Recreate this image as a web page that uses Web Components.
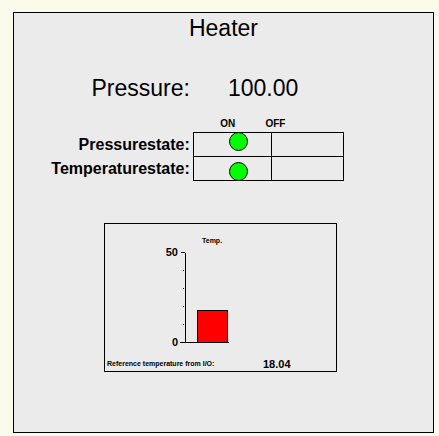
<!DOCTYPE html>
<html lang="en">
<head>
<meta charset="utf-8">
<title>Heater</title>
<style>
html, body { height: 100%; margin: 0; }
body { background: #fbfbec; color: #000; font-family: "Liberation Sans", Arial, sans-serif; display: flex; }
</style>
</head>
<body>
<heater-panel heading="Heater">
  <value-readout label="Pressure:" value="100.00"></value-readout>
  <state-table></state-table>
  <temp-gauge value="18.04" max="50"></temp-gauge>
</heater-panel>
<script>
class HeaterPanel extends HTMLElement {
  constructor() {
    super();
    this.attachShadow({ mode: 'open' }).innerHTML = `
      <style>
        :host { display: flex; flex-direction: column; flex: 1; box-sizing: border-box;
          margin: 12px 5px 3px 13px; border: 1px solid #000; background: #ebebeb; }
        h1 { margin: 0; font-size: 23px; line-height: 30px; font-weight: 400; text-align: center; }
      </style>
      <h1></h1><slot></slot>`;
    this.shadowRoot.querySelector('h1').textContent = this.getAttribute('heading');
  }
}
class ValueReadout extends HTMLElement {
  constructor() {
    super();
    this.attachShadow({ mode: 'open' }).innerHTML = `
      <style>
        :host { display: grid; grid-template-columns: 42% 1fr; column-gap: 38px;
          margin-top: 30px; font-size: 23px; line-height: 30px; }
        label { text-align: right; }
      </style>
      <label for="v"></label><output id="v"></output>`;
    this.shadowRoot.querySelector('label').textContent = this.getAttribute('label');
    this.shadowRoot.querySelector('output').textContent = this.getAttribute('value');
  }
}
class StateLamp extends HTMLElement {
  constructor() {
    super();
    this.attachShadow({ mode: 'open' }).innerHTML = `
      <style>
        :host { display: block; }
        svg { display: block; }
      </style>
      <svg width="19" height="19" viewBox="0 0 19 19" aria-hidden="true">
        <circle cx="9.5" cy="9.5" r="9" fill="#0f0" stroke="#000"/>
      </svg>`;
  }
}
class StateTable extends HTMLElement {
  constructor() {
    super();
    this.attachShadow({ mode: 'open' }).innerHTML = `
      <style>
        :host { display: block; margin-top: 14px; }
        table { width: 330px; border-collapse: collapse; table-layout: fixed; }
        .name { width: 179px; } .on { width: 78px; } .off { width: 72px; }
        th, td { padding: 0; }
        thead th { font-size: 10px; line-height: 14px; height: 15px; text-align: left; vertical-align: top; }
        thead .h-on { padding-left: 27px; }
        thead .h-off { text-indent: -6px; }
        tbody th { font-size: 16px; line-height: 22px; text-align: right; padding-right: 3px; }
        tbody td { height: 23px; border: 1px solid #000; vertical-align: top; }
        tbody tr:last-child td { vertical-align: bottom; }
        state-lamp { margin: -1px 0 0 35px; }
        tr:last-child state-lamp { margin: 0 0 -1px 35px; }
      </style>
      <table>
        <colgroup><col class="name"><col class="on"><col class="off"></colgroup>
        <thead><tr><td></td><th class="h-on" scope="col">ON</th><th class="h-off" scope="col">OFF</th></tr></thead>
        <tbody>
          <tr><th scope="row">Pressurestate:</th><td><state-lamp></state-lamp></td><td></td></tr>
          <tr><th scope="row">Temperaturestate:</th><td><state-lamp></state-lamp></td><td></td></tr>
        </tbody>
      </table>`;
  }
}
class TempGauge extends HTMLElement {
  constructor() {
    super();
    const value = this.getAttribute('value'), max = this.getAttribute('max');
    const h = Math.round(value / max * 90);
    this.attachShadow({ mode: 'open' }).innerHTML = `
      <style>
        :host { display: block; box-sizing: border-box; width: 233px; margin: 42px 0 0 90px;
          border: 1px solid #000; font-weight: 700; }
        svg { display: block; }
        .num { font-size: 11px; }
        .small { font-size: 7px; }
        footer { display: grid; grid-template-columns: 156px 1fr; align-items: center;
          padding-left: 2px; line-height: 14px; }
      </style>
      <svg width="231" height="133" viewBox="0 0 231 133" role="img" aria-label="Temperature">
        <text class="small" x="97" y="19">Temp.</text>
        <text class="num" x="73" y="32" text-anchor="end">${max}</text>
        <text class="num" x="73" y="122" text-anchor="end">0</text>
        <path d="M76 28.5h4M75 118.5h49M80.5 29v90M78 46.5h1M78 64.5h1M78 82.5h1M78 100.5h1" fill="none" stroke="#000"/>
        <rect x="92.5" y="${118.5 - h}" width="30" height="${h}" fill="#f00" stroke="#000"/>
      </svg>
      <footer><label class="small" for="t">Reference temperature from I/O:</label><output class="num" id="t">${value}</output></footer>`;
  }
}
customElements.define('heater-panel', HeaterPanel);
customElements.define('value-readout', ValueReadout);
customElements.define('state-lamp', StateLamp);
customElements.define('state-table', StateTable);
customElements.define('temp-gauge', TempGauge);
</script>
</body>
</html>
